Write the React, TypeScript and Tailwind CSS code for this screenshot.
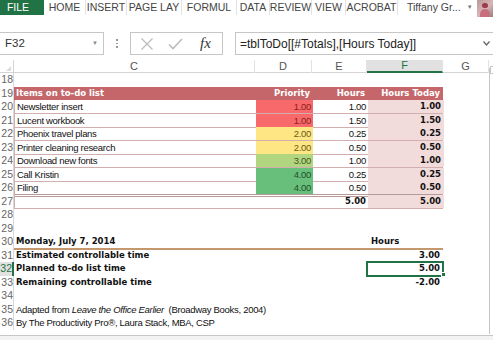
import React from "react";

const UI = { fontFamily: '"Liberation Sans", Arial, sans-serif' };
const CELL = { fontFamily: '"Liberation Sans", Arial, sans-serif' };
const BOLD = { fontFamily: '"DejaVu Sans", Verdana, sans-serif' };

const GRID = "grid grid-cols-[14px_241px_57px_55px_76px_46px_1fr]";

type Cell = {
  text?: React.ReactNode;
  cls?: string;
  bold?: boolean;
};

const prioBg: Record<string, string> = {
  "1.00": "bg-[#f8696b] text-[#8a2020]",
  "2.00": "bg-[#fde683] text-[#6b5a1a]",
  "3.00": "bg-[#b2d580] text-[#3d5a1f]",
  "4.00": "bg-[#68bf7b] text-[#1f4f2a]",
};

const todo = [
  { n: 20, item: "Newsletter insert", p: "1.00", h: "1.00" },
  { n: 21, item: "Lucent workbook", p: "1.00", h: "1.50" },
  { n: 22, item: "Phoenix travel plans", p: "2.00", h: "0.25" },
  { n: 23, item: "Printer cleaning research", p: "2.00", h: "0.50" },
  { n: 24, item: "Download new fonts", p: "3.00", h: "1.00" },
  { n: 25, item: "Call Kristin", p: "4.00", h: "0.25" },
  { n: 26, item: "Filing", p: "4.00", h: "0.50" },
];

function RowNum({ n, active }: { n: number; active?: boolean }) {
  return (
    <div
      className={`h-full overflow-hidden text-right text-[10.5px] leading-[13.5px] border-r ${
        active ? "text-[#217346] border-r-2 border-[#217346] bg-[#e1e1e1]" : "text-[#666] border-[#d8d8d8]"
      }`}
      style={{ ...UI, direction: "rtl" }}
    >
      {n}
    </div>
  );
}

function Row({
  n,
  active,
  c,
  d,
  e,
  f,
  cls = "",
}: {
  n: number;
  active?: boolean;
  c?: Cell;
  d?: Cell;
  e?: Cell;
  f?: Cell;
  cls?: string;
}) {
  const cell = (x: Cell | undefined, align: string) => (
    <div
      className={`h-full whitespace-nowrap leading-[13px] ${align} ${x?.bold ? "font-bold text-[8.5px]" : "text-[9.5px] tracking-[-0.3px]"} ${x?.cls ?? ""}`}
      style={x?.bold ? BOLD : CELL}
    >
      {x?.text}
    </div>
  );
  return (
    <div className={`${GRID} h-[13.5px] text-[#111]`}>
      <RowNum n={n} active={active} />
      <div className={`col-span-4 grid grid-cols-[241px_57px_55px_76px] h-full ${cls}`}>
        {cell(c, "text-left pl-[2px]")}
        {cell(d, "text-right pr-[2px]")}
        {cell(e, "text-right pr-[2px]")}
        {cell(f, "text-right pr-[3px]")}
      </div>
      <div />
      <div />
    </div>
  );
}

function Ribbon() {
  const tabs: [string, string][] = [
    ["HOME", "w-[42px]"],
    ["INSERT", "w-[41px]"],
    ["PAGE LAY", "w-[55px]"],
    ["FORMUL", "w-[55px]"],
    ["DATA", "w-[33px]"],
    ["REVIEW", "w-[42px]"],
    ["VIEW", "w-[34px]"],
    ["ACROBAT", "w-[52px]"],
  ];
  return (
    <div className="flex h-[17px] items-stretch bg-white text-[10.5px] text-[#444] whitespace-nowrap" style={UI}>
      <div className="w-[44px] flex-none h-[15px] bg-[#217346] text-white flex items-center justify-center pr-[8px]">FILE</div>
      {tabs.map(([t, w]) => (
        <div key={t} className={`${w} flex-none flex items-center justify-center border-r border-[#e3e3e3] h-[15px]`}>
          {t}
        </div>
      ))}
      <div className="ml-[9px] flex-none flex items-center h-[15px]">Tiffany Gr...</div>
      <div className="ml-[6px] flex-none flex items-center h-[15px] text-[6px] text-[#777]">▼</div>
      <div className="ml-[4px] flex-none w-[18px] h-[17px] bg-gradient-to-br from-[#b99a98] via-[#d8b5b8] to-[#8f7a78] relative">
        <div className="absolute left-[5px] top-[3px] w-[6px] h-[5px] rounded-full bg-[#9c3c4a]" />
        <div className="absolute left-[3px] top-[9px] w-[10px] h-[8px] rounded-t-full bg-[#c76f7f]" />
      </div>
    </div>
  );
}

function FormulaBar() {
  return (
    <div className="flex h-[23px] mt-[15px] items-stretch bg-white text-[#333]" style={UI}>
      <div className="w-[104px] border border-l-0 border-[#c6c6c6] flex items-center justify-between pl-[5px] pr-[5px]">
        <span className="text-[11.5px]">F32</span>
        <span className="text-[6px] text-[#888]">▼</span>
      </div>
      <div className="w-[26px] flex flex-col items-center justify-center gap-[2px]">
        <div className="w-[1.5px] h-[1.5px] bg-[#999]" />
        <div className="w-[1.5px] h-[1.5px] bg-[#999]" />
        <div className="w-[1.5px] h-[1.5px] bg-[#999]" />
      </div>
      <div className="w-[93px] border border-[#c6c6c6] flex items-center">
        <svg width="14" height="14" viewBox="0 0 14 14" className="ml-[9px]">
          <path d="M1.5 1.5 L12.5 12.5 M12.5 1.5 L1.5 12.5" stroke="#bdbdbd" strokeWidth="1.3" fill="none" />
        </svg>
        <svg width="15" height="12" viewBox="0 0 15 12" className="ml-[14px]">
          <path d="M1 6.5 L5 10.5 L14 1" stroke="#bdbdbd" strokeWidth="1.6" fill="none" />
        </svg>
        <span
          className="ml-[17px] text-[15px] italic text-[#333] leading-none"
          style={{ fontFamily: '"Liberation Serif", "Times New Roman", serif' }}
        >
          fx
        </span>
      </div>
      <div className="w-[12px]" />
      <div className="flex-1 border border-r-0 border-[#c6c6c6] flex items-center justify-between pl-[4px] pr-[3px]">
        <span className="text-[12px] text-[#222]">=tblToDo[[#Totals],[Hours Today]]</span>
        <svg width="7" height="5" viewBox="0 0 7 5">
          <path d="M0.5 0.5 L3.5 4 L6.5 0.5" stroke="#666" strokeWidth="1.3" fill="none" />
        </svg>
      </div>
    </div>
  );
}

function ColHeaders() {
  const cols: [string, boolean][] = [
    ["C", false],
    ["D", false],
    ["E", false],
    ["F", true],
    ["G", false],
  ];
  return (
    <div className={`${GRID} h-[13px] mt-[5px] border-b border-[#d4d4d4] text-[11px] text-[#555]`} style={UI}>
      <div className="border-r border-[#d4d4d4] relative">
        <div className="absolute right-[2px] bottom-[2px] w-0 h-0 border-l-[5px] border-l-transparent border-b-[5px] border-b-[#dcdcdc]" />
      </div>
      {cols.map(([c, sel]) => (
        <div
          key={c}
          className={`flex items-center justify-center leading-none border-r border-[#e2e2e2] ${
            sel ? "bg-[#e1e1e1] text-[#217346] border-b-2 border-b-[#217346]" : ""
          }`}
        >
          {c}
        </div>
      ))}
      <div />
    </div>
  );
}

export default function App() {
  const line = "border-b border-[#d3aeae]";
  return (
    <div className="w-[493px] h-[340px] bg-white overflow-hidden relative">
      <Ribbon />
      <FormulaBar />
      <ColHeaders />
      <div className="relative">
        <Row n={18} />
        <Row
          n={19}
          cls="bg-[#c5676a] text-white"
          c={{ text: "Items on to-do list", bold: true, cls: "text-white" }}
          d={{ text: "Priority", bold: true, cls: "text-white" }}
          e={{ text: "Hours", bold: true, cls: "text-white" }}
          f={{ text: "Hours Today", bold: true, cls: "text-white" }}
        />
        {todo.map((t, i) => (
          <Row
            key={t.n}
            n={t.n}
            cls={`border-x border-[#d3aeae] ${i === todo.length - 1 ? "border-b-[3px] border-b-[#b79a98] border-double" : line}`}
            c={{ text: t.item }}
            d={{ text: t.p, cls: prioBg[t.p] }}
            e={{ text: t.h }}
            f={{ text: t.h, bold: true, cls: "bg-[#f2dcdb] text-[#111]" }}
          />
        ))}
        <Row
          n={27}
          cls={`border-x border-[#d3aeae] ${line}`}
          e={{ text: "5.00", bold: true }}
          f={{ text: "5.00", bold: true, cls: "bg-[#f2dcdb]" }}
        />
        <Row n={28} />
        <Row n={29} />
        <Row
          n={30}
          cls="border-b-2 border-[#c4976c]"
          c={{ text: "Monday, July 7, 2014", bold: true }}
          f={{ text: "Hours", bold: true, cls: "!text-left pl-[4px]" }}
        />
        <Row n={31} c={{ text: "Estimated controllable time", bold: true }} f={{ text: "3.00", bold: true }} />
        <Row
          n={32}
          active
          c={{ text: "Planned to-do list time", bold: true }}
          f={{ text: "5.00", bold: true, cls: "outline-2 outline-[#217346] -outline-offset-1 relative" }}
        />
        <Row n={33} c={{ text: "Remaining controllable time", bold: true }} f={{ text: "-2.00", bold: true }} />
        <Row n={34} />
        <Row
          n={35}
          c={{
            text: (
              <>
                Adapted from <i>Leave the Office Earlier</i>&nbsp; (Broadway Books, 2004)
              </>
            ),
          }}
        />
        <Row n={36} c={{ text: "By The Productivity Pro®, Laura Stack, MBA, CSP" }} />
        {/* fill handle of the active cell */}
        <div className="absolute left-[441px] top-[199px] w-[5px] h-[5px] bg-[#217346] border border-white" />
      </div>
      {/* right pane edge */}
      <div className="absolute left-[489px] top-[68px] bottom-[6px] w-[4px] border-l border-[#c6c6c6]" />
      <div className="absolute left-[490px] top-[66px] w-[6px] h-[8px] border border-[#c6c6c6] bg-white" />
      {/* sheet bar at the bottom */}
      <div className="absolute left-0 right-0 bottom-0 h-[5px] border-t border-[#c6c6c6] bg-[#f3f3f3]" />
    </div>
  );
}
